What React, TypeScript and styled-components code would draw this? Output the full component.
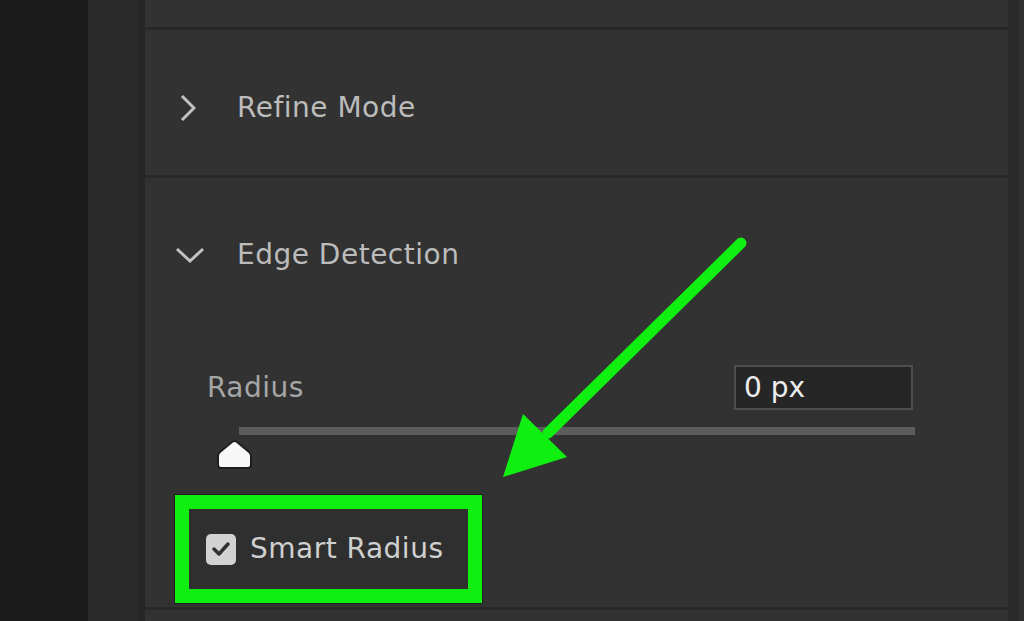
import React from 'react';
import styled, { createGlobalStyle } from 'styled-components';

const GlobalStyle = createGlobalStyle`
  html, body {
    margin: 0;
    padding: 0;
    background: #1b1b1b;
  }
  #root {
    width: 1024px;
    height: 621px;
    overflow: hidden;
  }
`;

const Screen = styled.div`
  position: relative;
  display: flex;
  width: 1024px;
  height: 621px;
  font-family: 'DejaVu Sans', 'Liberation Sans', sans-serif;
  font-size: 28px;
  letter-spacing: 0.5px;
`;

const Backdrop = styled.div`
  width: 88px;
  background: #1b1b1b;
`;

const ToolColumn = styled.div`
  width: 49px;
  background: #2a2a2a;
`;

const ColumnGap = styled.div`
  width: 8px;
  background: #262626;
`;

const Panel = styled.div`
  flex: 1;
  display: flex;
  flex-direction: column;
  background: #323232;
`;

const RightStrip = styled.div`
  width: 16px;
  display: flex;
  background: #2a2a2a;
  &::after {
    content: '';
    margin-left: auto;
    width: 5px;
    background: #303030;
  }
`;

const Section = styled.div<{ $height?: number }>`
  ${(p) => (p.$height ? `height: ${p.$height}px;` : '')}
  display: flex;
  flex-direction: column;
  border-bottom: 3px solid #282828;
  flex-shrink: 0;
`;

const SectionHeader = styled.div<{ $height: number; $shift: number }>`
  box-sizing: border-box;
  display: flex;
  align-items: center;
  height: ${(p) => p.$height}px;
  padding-left: 35px;
  padding-top: ${(p) => p.$shift * 2}px;
`;

const ChevronBox = styled.div`
  width: 57px;
  display: flex;
  align-items: center;
`;

const HeaderTitle = styled.div`
  color: #bcbcbc;
  line-height: 1;
`;

const EdgeBody = styled.div`
  display: flex;
  flex-direction: column;
  padding: 0 95px 4px 30px;
`;

const FieldRow = styled.div`
  display: flex;
  align-items: center;
  justify-content: space-between;
  height: 45px;
  margin-top: 35px;
  padding-left: 32px;
`;

const FieldLabel = styled.div`
  color: #a6a6a6;
  line-height: 1;
`;

const ValueInput = styled.div`
  box-sizing: border-box;
  width: 179px;
  height: 45px;
  border: 2px solid #4e4e4e;
  background: #262626;
  color: #ededed;
  display: flex;
  align-items: center;
  padding-left: 8px;
  line-height: 1;
  letter-spacing: 0;
`;

const SliderArea = styled.div`
  position: relative;
  height: 68px;
  margin-top: 17px;
  padding-left: 64px;
`;

const Track = styled.div`
  height: 8px;
  margin-right: -2px;
  background: #5c5c5c;
`;

const Thumb = styled.svg`
  position: absolute;
  left: 41px;
  top: 12px;
`;

const Highlight = styled.div`
  box-sizing: border-box;
  width: 307px;
  height: 108px;
  border: 14px solid #10f010;
  outline: 1px solid #1e1e1e;
  display: flex;
  align-items: center;
  gap: 14px;
  padding-left: 17px;
  background: #2f2f2f;
`;

const CheckBox = styled.div`
  width: 30px;
  height: 31px;
  border-radius: 5px;
  background: #d2d2d2;
  display: flex;
  align-items: center;
  justify-content: center;
`;

const CheckLabel = styled.div`
  color: #d0d0d0;
  line-height: 1;
`;

const ArrowLayer = styled.svg`
  position: absolute;
  left: 0;
  top: 0;
  pointer-events: none;
`;

const ChevronRight = () => (
  <svg width="16" height="28" viewBox="0 0 16 28">
    <polyline points="2,2 14,14 2,26" fill="none" stroke="#c2c2c2" strokeWidth="3" />
  </svg>
);

const ChevronDown = () => (
  <svg width="30" height="16" viewBox="0 0 30 16" style={{ marginLeft: -5 }}>
    <polyline points="2,2 15,14 28,2" fill="none" stroke="#c2c2c2" strokeWidth="3" />
  </svg>
);

export default function App() {
  return (
    <>
      <GlobalStyle />
      <Screen>
        <Backdrop />
        <ToolColumn />
        <ColumnGap />
        <Panel>
          <Section $height={27} />
          <Section>
            <SectionHeader $height={145} $shift={5}>
              <ChevronBox>
                <ChevronRight />
              </ChevronBox>
              <HeaderTitle>Refine Mode</HeaderTitle>
            </SectionHeader>
          </Section>
          <Section>
            <SectionHeader $height={152} $shift={1}>
              <ChevronBox>
                <ChevronDown />
              </ChevronBox>
              <HeaderTitle>Edge Detection</HeaderTitle>
            </SectionHeader>
            <EdgeBody>
              <FieldRow>
                <FieldLabel>Radius</FieldLabel>
                <ValueInput>0 px</ValueInput>
              </FieldRow>
              <SliderArea>
                <Track />
                <Thumb width="37" height="31" viewBox="0 0 37 31">
                  <path
                    d="M16 3 Q18.5 1 21 3 L33 13 Q35 14.5 35 17 L35 26 Q35 29 32 29 L5 29 Q2 29 2 26 L2 17 Q2 14.5 4 13 Z"
                    fill="#f7f7f7"
                    stroke="#1e1e1e"
                    strokeWidth="2"
                  />
                </Thumb>
              </SliderArea>
              <Highlight>
                <CheckBox>
                  <svg width="20" height="18" viewBox="0 0 20 18">
                    <polyline
                      points="3,9 8,14 17,4"
                      fill="none"
                      stroke="#303030"
                      strokeWidth="3.5"
                      strokeLinecap="round"
                      strokeLinejoin="round"
                    />
                  </svg>
                </CheckBox>
                <CheckLabel>Smart Radius</CheckLabel>
              </Highlight>
            </EdgeBody>
          </Section>
        </Panel>
        <RightStrip />
        <ArrowLayer width="1024" height="621" viewBox="0 0 1024 621">
          <line x1="741" y1="243" x2="548" y2="433" stroke="#10f010" strokeWidth="11" strokeLinecap="round" />
          <polygon points="503,477 523,414 567,457" fill="#10f010" />
        </ArrowLayer>
      </Screen>
    </>
  );
}
